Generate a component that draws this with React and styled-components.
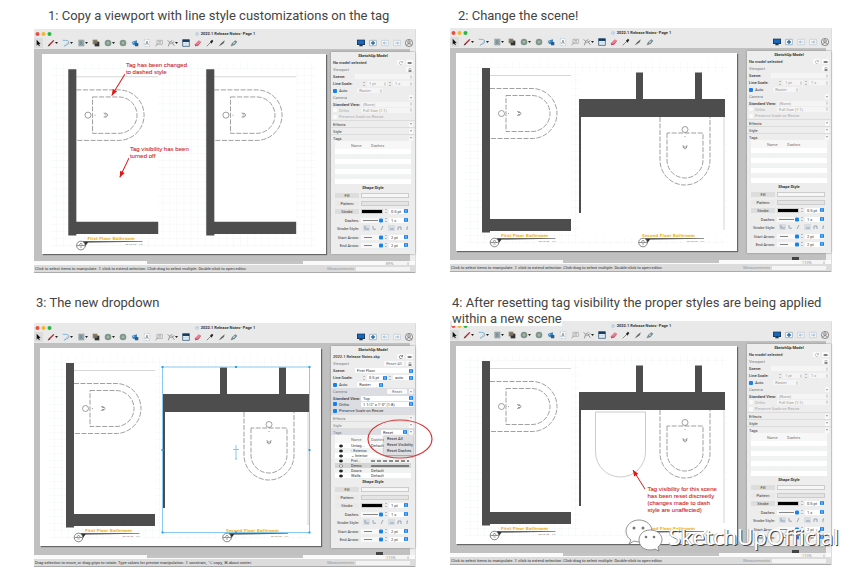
import React from "react";
import styled, { createGlobalStyle } from "styled-components";

const tools = [
  { name: "Select", kind: "cursor", active: true },
  { name: "Line", kind: "pencil", menu: true },
  { name: "Arc", kind: "arc", menu: true },
  { name: "Rectangle", kind: "rect", menu: true },
  { name: "Offset", kind: "offset" },
  { name: "Circle", kind: "circle", menu: true },
  { name: "Polygon", kind: "circle" },
  { name: "Scrapbook", kind: "camera" },
  { name: "Text", kind: "text" },
  { name: "Label", kind: "label" },
  { name: "Dimension", kind: "dimension", menu: true },
  { name: "Table", kind: "table" },
  { name: "Erase", kind: "eraser" },
  { name: "Style", kind: "dropper" },
  { name: "Split", kind: "knife" },
  { name: "Join", kind: "glue" },
];

const pageTools = [
  { name: "Present", kind: "monitor" },
  { name: "Add page", kind: "addPage" },
  { name: "Previous page", kind: "prevPage" },
  { name: "Next page", kind: "nextPage" },
  { name: "Account", kind: "person" },
];

const glyphs = {
  cursor: <path d="M4 1v9l2-2 1.500 3 1.300-.7L7.400 7.500H10z" fill="#111" />,
  pencil: (
    <>
      <path d="M1.500 11 3 8 9.500 1.500l1.500 1L4.500 9.500z" fill="#b3262b" />
      <path d="M1 11.500 3 8l1.500 1.500z" fill="#333" />
    </>
  ),
  arc: (
    <>
      <path d="M1 2h5q5 0 4 5L3 11" fill="none" stroke="#66a9d8" strokeWidth="1.200" />
      <path d="M3 11 10 4" stroke="#aaa" strokeWidth="0.800" />
    </>
  ),
  rect: (
    <>
      <path d="M2 1h9v10H2z" fill="#9aa8a8" />
      <path d="M4 3h4v6H4z" fill="#7d949c" />
    </>
  ),
  offset: (
    <>
      <path d="M1 1h7v7H1z" fill="#8c8060" />
      <path d="M4 4h7v7H4z" fill="#333" />
      <path d="M3 3h5v4H3z" fill="#77746a" />
    </>
  ),
  circle: (
    <>
      <circle cx="6" cy="6" r="5" fill="#7f978e" />
      <circle cx="6" cy="6" r="3" fill="#a8b694" stroke="#6d8890" />
    </>
  ),
  camera: (
    <>
      <path d="M1 4 9 2v6L3 9z" fill="#3c86c5" />
      <path d="M5 6h6v5H6z" fill="#275d91" />
      <path d="m1 3 4 3" stroke="#d9eef8" />
    </>
  ),
  text: (
    <>
      <path d="M2 1h8v10H2z" fill="#fff" stroke="#8badc4" strokeDasharray="1 1" />
      <path d="m4 9 2-6 2 6M5 7h2" fill="none" stroke="#777" />
    </>
  ),
  label: (
    <>
      <path d="M3 2h8v6H3z" fill="#f5f5f5" stroke="#999" />
      <path d="m1 11 3-4M5 4h4M5 6h4" stroke="#888" />
    </>
  ),
  dimension: (
    <path d="m1 2 3 3-2 6M4 5l4-3M5 7l6-3M8 6l3 4" fill="none" stroke="#666" />
  ),
  table: (
    <>
      <path d="M1 1h10v10H1z" fill="#e8f2f8" stroke="#173c62" />
      <path d="M1 1h10v3.500H1z" fill="#173c62" />
      <path d="M1 7h10M6 4v7" stroke="#aac1d1" strokeWidth="0.600" />
    </>
  ),
  eraser: (
    <>
      <path d="m1 8 6-6 4 2-5 6-4 1z" fill="#e77f93" />
      <path d="m1 8 4 1 6-5-5 6-4 1z" fill="#bd4d66" />
    </>
  ),
  dropper: (
    <>
      <path d="M1 11 7 5" stroke="#888" strokeWidth="1.500" />
      <path d="m6 4 3-3 2 2-3 4z" fill="#222" />
    </>
  ),
  knife: <path d="m1 11 4-5 5-4-1 4-4 3z" fill="#666" />,
  glue: (
    <>
      <path d="m1 11 2-5 5-4 3 2-4 5z" fill="#6f8c9a" />
      <path d="m4 6 4-2-2 4z" fill="#d8ded5" />
      <path d="m1 11 2-3 1 2z" fill="#c07a45" />
    </>
  ),
  monitor: (
    <>
      <path d="M0 1h12v8H0z" fill="#1b2d42" />
      <path d="M1 2h10v6H1z" fill="#1767bd" />
      <path d="M4 9h4l1 2H3z" fill="#333" />
    </>
  ),
  addPage: (
    <>
      <path d="M1 2h10v8H1z" fill="#fff" stroke="#839db0" />
      <path d="M6 3v6M3 6h6" stroke="#246ca7" strokeWidth="2" />
    </>
  ),
  prevPage: (
    <>
      <path d="M1 2h10v8H1z" fill="#f6f6f6" stroke="#bbc8d1" />
      <path d="M3 6h6M6 4 3.500 6 6 8" fill="none" stroke="#7faed1" />
    </>
  ),
  nextPage: (
    <>
      <path d="M1 2h10v8H1z" fill="#f6f6f6" stroke="#bbc8d1" />
      <path d="M3 6h6M6 4l2.500 2L6 8" fill="none" stroke="#7faed1" />
    </>
  ),
  person: (
    <g fill="none" stroke="#555" strokeWidth="0.900">
      <circle cx="6" cy="6" r="5.500" />
      <circle cx="6" cy="4.500" r="2" />
      <path d="M2.500 10q0-3 3.500-3t3.500 3" />
    </g>
  ),
};

const Tool = ({ tool }) => (
  <ToolButton type="button" aria-label={tool.name} $menu={tool.menu} $active={tool.active}>
    <svg width="8" height="8" viewBox="0 0 12 12">
      {glyphs[tool.kind]}
    </svg>
    {tool.menu && (
      <svg width="3" height="2" viewBox="0 0 3 2">
        <path d="M0 0h3L1.500 2z" fill="#222" />
      </svg>
    )}
  </ToolButton>
);

const Picker = ({ label, value, on, width, children }) => (
  <PickerLabel $width={width} $grow={Boolean(children)}>
    {children}
    <PickerBox $on={on}>
      <select aria-label={label} defaultValue={value} disabled={!on}>
        <option>{value}</option>
      </select>
      <svg width="4" height="4" viewBox="0 0 8 8">
        {on && <rect width="8" height="8" rx="1.500" fill="#1781ea" />}
        <path d="M2 3.200 4 1.500 6 3.200M2 5 4 6.500 6 5" fill="none" stroke={on ? "#fff" : "#999"} />
      </svg>
    </PickerBox>
  </PickerLabel>
);

const Steps = () => (
  <svg width="2" height="6" viewBox="0 0 2 6">
    <path d="M0 2 1 1l1 1M0 4l1 1 1-1" fill="none" stroke="#888" strokeWidth="0.500" />
  </svg>
);

const Fold = () => (
  <FoldButton type="button" aria-label="Toggle section">
    <svg width="2" height="2" viewBox="0 0 3 2">
      <path d="M0 0h3L1.500 2z" fill="#777" />
    </svg>
  </FoldButton>
);

const tagRows = [
  ["Untag...", "Default", true],
  ["› Exterior", "", true],
  ["⌄ Interior", "", true],
  ["Fixt...", "dashed", true],
  ["Demo", "solid", false],
  ["Doors", "Default", true],
  ["Walls", "Default", true],
];

const TagTable = ({ on }) => (
  <Tags>
    <thead>
      <tr>
        <th />
        <th>Name</th>
        <th>Dashes</th>
      </tr>
    </thead>
    <tbody>
      {tagRows.map(([name, dashes, seen]) => (
        <TagRow key={name} $selected={on && !seen}>
          <td>
            {on && (
              <svg width="4" height="4" viewBox="0 0 8 8">
                <ellipse cx="4" cy="4" rx="3.500" ry="2.500" fill={seen ? "#222" : "#fff"} stroke="#444" />
              </svg>
            )}
          </td>
          <td>{on && name}</td>
          <td>
            {on && (dashes === "Default" ? dashes : dashes && (
              <svg width="38" height="2" viewBox="0 0 38 2">
                <path
                  d="M0 1h38"
                  stroke="#222"
                  strokeDasharray={dashes === "dashed" ? "4 2" : "none"}
                />
              </svg>
            ))}
          </td>
        </TagRow>
      ))}
    </tbody>
  </Tags>
);

const ModelPanel = ({ on }) => (
  <Panel>
    <PanelTitle>SketchUp Model</PanelTitle>
    <PanelRow $strong>
      <span>{on ? "2022.1 Release Notes.skp" : "No model selected"}</span>
      <Spacer />
      <SmallButton type="button" aria-label="Refresh model">
        <svg width="4" height="4" viewBox="0 0 8 8">
          <path d="M7 2a3.500 3.500 0 1 0 0 4M7 0v3H4" fill="none" stroke={on ? "#333" : "#999"} />
        </svg>
      </SmallButton>
      <SmallButton type="button" aria-label="Link model">∞</SmallButton>
    </PanelRow>
    <PanelRow $muted>
      Viewport
      <Spacer />
      {on && <SmallButton type="button" $wide>Reset All</SmallButton>}
      <SmallButton type="button" aria-label="Lock viewport">
        <svg width="4" height="4" viewBox="0 0 8 8">
          <path d="M2 4V1h4v3" fill="none" stroke="#888" />
          <path d="M1 4h6v4H1z" fill="#888" />
        </svg>
      </SmallButton>
    </PanelRow>
    <PanelRow $strong>
      <Picker label="Scene" value={on ? "First Floor" : ""} on={on} width={58}>Scene:</Picker>
    </PanelRow>
    <PanelRow $strong>
      Line Scale:
      <Spacer />
      <Steps />
      <Picker label="Line scale weight" value={on ? "0.5 pt" : "1 pt"} on={on} width={20} />
      <Steps />
      <Picker label="Dash scale" value={on ? "auto" : "1 x"} on={on} width={20} />
    </PanelRow>
    <PanelRow>
      <CheckLabel>
        <input type="checkbox" defaultChecked />
        Auto
      </CheckLabel>
      <RenderSlot>
        <Picker label="Render mode" value="Raster" on={on} width={26} />
      </RenderSlot>
    </PanelRow>
    <CameraGroup $on={on}>
      <PanelRow $muted>
        Camera
        <Spacer />
        {on && <SmallButton type="button" $wide>Reset</SmallButton>}
        <Fold />
      </PanelRow>
      <PanelRow $short $strong>
        <Picker label="Standard view" value={on ? "Top" : "(None)"} on={on} width={52}>
          Standard View:
        </Picker>
      </PanelRow>
      <PanelRow $short $dim={!on}>
        <CheckLabel>
          <input type="checkbox" defaultChecked={on} disabled={!on} />
          Ortho
        </CheckLabel>
        <Spacer />
        <Picker label="Scale" value={on ? `1 1/2" = 1'-0" (1:8)` : "Full Size (1:1)"} on={on} width={52} />
      </PanelRow>
      <PanelRow $dim={!on}>
        <CheckLabel>
          <input type="checkbox" defaultChecked={on} disabled={!on} />
          Preserve Scale on Resize
        </CheckLabel>
      </PanelRow>
    </CameraGroup>
    <PanelRow $line $muted={on}>Effects<Spacer /><Fold /></PanelRow>
    <PanelRow $line $muted={on}>Style<Spacer /><Fold /></PanelRow>
    <PanelRow $line $muted={on} $tint={on}>
      Tags
      <Spacer />
      {on && <Picker label="Reset tags" value="Reset" on width={26} />}
      <Fold />
      {on && (
        <Menu role="menu">
          <button type="button" role="menuitem">Reset All</button>
          <button type="button" role="menuitem">Reset Visibility</button>
          <button type="button" role="menuitem">Reset Dashes</button>
        </Menu>
      )}
    </PanelRow>
    <TagTable on={on} />
    <PanelTitle>Shape Style</PanelTitle>
    <ShapeForm>
      <FormRow>
        <ShapeButton type="button">Fill</ShapeButton>
        <Swatch />
      </FormRow>
      <FormRow>
        <ShapeButton type="button" $plain>Pattern</ShapeButton>
        <Swatch $grey />
      </FormRow>
      <FormRow>
        <ShapeButton type="button" $plain={on}>Stroke</ShapeButton>
        <Ink />
        <Steps />
        <Picker label="Stroke width" value={on ? "1 pt" : "0.5 pt"} on width={19} />
      </FormRow>
      <FormRow $apart>
        <FormName>Dashes:</FormName>
        <LineChoice />
        <Steps />
        <Picker label="Dash size" value="1 x" on width={19} />
      </FormRow>
      <FormRow>
        <FormName>Stroke Style:</FormName>
        <StrokeIcons />
      </FormRow>
      <FormRow $apart>
        <FormName>Start Arrow:</FormName>
        <LineChoice short />
        <Steps />
        <Picker label="Start arrow size" value="2 pt" on width={19} />
      </FormRow>
      <FormRow>
        <FormName>End Arrow:</FormName>
        <LineChoice short />
        <Steps />
        <Picker label="End arrow size" value="2 pt" on width={19} />
      </FormRow>
    </ShapeForm>
  </Panel>
);

const LineChoice = ({ short }) => (
  <svg width="22" height="5" viewBox="0 0 22 5">
    <path d="M0 0h22v5H0z" fill="#f8f8f8" />
    <path d={short ? "M3 2.500h8" : "M2 2.500h15"} stroke="#555" strokeWidth="0.700" />
    <rect x="18" y="0.500" width="4" height="4" rx="1" fill="#1781ea" />
  </svg>
);

const StrokeIcons = () => (
  <svg width="48" height="6" viewBox="0 0 48 6">
    <path d="M2 0h7v6H2zM27 0h7v6h-7z" fill="#d8dde2" />
    <path
      d="M4 1v3h4M12 1v3q0 1 3 0M20 5l2-4M29 4h4M37 5V2h3v3M46 5V2h1"
      fill="none"
      stroke="#7d95ad"
      strokeWidth="0.800"
    />
  </svg>
);

const PlanTitle = ({ x, bubble, children }) => (
  <g>
    <TitleText x={x} y="184">{children}</TitleText>
    <path d={`M${bubble + 2} 185.200h59v.6l-54 .8-3 4z`} fill="#333" />
    <text x={bubble + 44} y="189" fontSize="2" fill="#666">SCALE: 1/2" = 1'-0"</text>
    <circle cx={bubble} cy="189.500" r="4.300" fill="#fff" stroke="#555" strokeWidth="0.700" />
    <path d={`M${bubble - 4} 189.500h8m-6 0 2-2.500 2 2.500m-3 1.500h2`} stroke="#555" strokeWidth="0.600" fill="none" />
  </g>
);

const FirstPlan = ({ x = 0 }) => (
  <g transform={`translate(${x} 0)`}>
    <path d="M34 15h81v151H34z" fill="#fff" />
    <path d="M34 22.500h81" stroke="#bbb" strokeWidth="0.600" />
    <path d="M26 15h8v151h81v12H34v1.500h-8z" fill="#4d4d4d" />
    <g fill="none" stroke="#777" strokeWidth="0.700">
      <path d="M34 35.500h42a25 25 0 0 1 0 50H34" strokeDasharray="5 1.500" />
      <path d="M50 42.500h26a18 18 0 0 1 0 36H50z" strokeDasharray="5 1.500" />
      <circle cx="45.500" cy="60.500" r="3" />
      <path d="M61 58.500q4 0 4 2t-4 2M62 59.500h2M62 61.500h2M52 60.500h1" />
    </g>
  </g>
);

const SecondPlan = () => (
  <g>
    <path d="M123 19h146v166H123z" fill="#fff" />
    <path d="M268 64v113" stroke="#bbb" strokeWidth="0.600" />
    <path d="M180 19.500h7V46h52V19.500h7V46h23v18H125v96h-2V46h57z" fill="#4d4d4d" />
    <g fill="none" stroke="#777" strokeWidth="0.700">
      <path d="M204 64v43a25 25 0 0 0 50 0V64" strokeDasharray="5 1.500" />
      <path d="M211 80v27a18 18 0 0 0 36 0V80z" strokeDasharray="5 1.500" />
      <circle cx="229" cy="76.500" r="3" />
      <path d="M227 92q0 4 2 4t2-4M228 93v2M230 93v2M229 83v1" />
    </g>
  </g>
);

const Arrow = ({ x1, y1, x2, y2 }) => {
  const turn = (Math.atan2(y2 - y1, x2 - x1) * 180) / Math.PI;
  return (
    <g fill="#e01515" stroke="#e01515">
      <path d={`M${x1} ${y1} ${x2} ${y2}`} />
      <path d="M0 0-6-2.500v5z" stroke="none" transform={`translate(${x2} ${y2}) rotate(${turn})`} />
    </g>
  );
};

const Note = ({ x, y, lines }) => (
  <text fontSize="6" fill="#cf2a2f" stroke="#cf2a2f" strokeWidth="0.100">
    {lines.map((line, i) => (
      <tspan key={line} x={x} y={y + i * 7}>{line}</tspan>
    ))}
  </text>
);

const Sheet = ({ id, children }) => (
  <Paper viewBox="0 0 281 198">
    <defs>
      <pattern id={id} width="7" height="7" patternUnits="userSpaceOnUse">
        <path d="M0 0h7M0 0v7" stroke="#e6ecef" strokeWidth="0.500" fill="none" />
      </pattern>
    </defs>
    <path d="M9 9h262v182H9z" fill={`url(#${id})`} />
    {children}
  </Paper>
);

const AppWindow = ({ children, inset, gap, on, zoom, marker, status }) => (
  <Frame>
    <TitleBar>
      <Lights viewBox="0 0 18 4">
        <circle cx="2.500" cy="2" r="2" fill="#f04b43" />
        <circle cx="8.500" cy="2" r="2" fill="#f5b52e" />
        <circle cx="14.500" cy="2" r="2" fill="#24b83d" />
      </Lights>
      <DocName>
        <svg width="4" height="4" viewBox="0 0 8 8">
          <circle cx="4" cy="4" r="3.500" fill="#9cc6ea" />
          <path d="M3 2v3h3" fill="none" stroke="#fff" />
        </svg>
        2022.1 Release Notes- Page 1
      </DocName>
    </TitleBar>
    <ToolBar>
      {tools.map((tool) => <Tool key={tool.name} tool={tool} />)}
      <Spacer />
      {pageTools.map((tool) => <Tool key={tool.name} tool={tool} />)}
    </ToolBar>
    <Workspace $inset={inset} $gap={gap}>
      {children}
      <ModelPanel on={on} />
      {marker && <Marker />}
    </Workspace>
    <ScrollRow>
      <Thumb />
      <ZoomSlot>
        <Picker label="Zoom" value={zoom} on={false} width={26} />
      </ZoomSlot>
    </ScrollRow>
    <StatusBar>
      <span>{status}</span>
      <Measure>
        Measurements
        <input />
      </Measure>
    </StatusBar>
  </Frame>
);

const selectHint =
  "Click to select items to manipulate. ⇧ click to extend selection. Click-drag to select multiple. Double-click to open editor.";
const dragHint =
  "Drag selection to move, or drag grips to rotate. Type values for precise manipulation. ⇧ constrain, ⌥ copy, ⌘ about center.";

const App = () => (
  <Board>
    <GlobalStyle />
    <Step>
      <Caption $height={29} $indent={14}>
        <span>1: Copy a viewport with line style customizations on the tag</span>
      </Caption>
      <AppWindow inset={8} gap={5} zoom="89%" status={selectHint}>
        <Sheet id="gridCopy">
          <FirstPlan />
          <FirstPlan x={136.500} />
          <PlanTitle x={45} bubble={38.500}>First Floor Bathroom</PlanTitle>
          <Note x={83} y={13} lines={["Tag has been changed", "to dashed style"]} />
          <Arrow x1={82} y1={20} x2={69} y2={41} />
          <Note x={87} y={96} lines={["Tag visibility has been", "turned off"]} />
          <Arrow x1={86} y1={103} x2={77} y2={122} />
        </Sheet>
      </AppWindow>
    </Step>
    <Step>
      <Caption $height={28} $indent={8}>
        <span>2: Change the scene!</span>
      </Caption>
      <AppWindow inset={6} gap={10} zoom="110%" marker status={selectHint}>
        <Sheet id="gridScene">
          <FirstPlan />
          <SecondPlan />
          <PlanTitle x={45} bubble={38.500}>First Floor Bathroom</PlanTitle>
          <PlanTitle x={186} bubble={187}>Second Floor Bathroom</PlanTitle>
        </Sheet>
      </AppWindow>
    </Step>
    <Step>
      <Caption $height={32} $indent={2}>
        <span>3: The new dropdown</span>
      </Caption>
      <AppWindow inset={6} gap={10} zoom="110%" marker on status={dragHint}>
        <Sheet id="gridMenu">
          <FirstPlan />
          <SecondPlan />
          <PlanTitle x={45} bubble={38.500}>First Floor Bathroom</PlanTitle>
          <PlanTitle x={186} bubble={187}>Second Floor Bathroom</PlanTitle>
          <path d="M122.500 19h147v165.500h-147z" fill="none" stroke="#55b5e6" strokeWidth="0.700" />
          <path
            d="M121.500 18h2v2h-2zM195 18h2v2h-2zM268.500 18h2v2h-2zM121.500 101h2v2h-2zM268.500 101h2v2h-2zM121.500 183.500h2v2h-2zM195 183.500h2v2h-2zM268.500 183.500h2v2h-2z"
            fill="#2fa0dc"
          />
          <path d="M196 97v14M193 101.500h6M195 111h2" stroke="#55b5e6" strokeWidth="0.700" />
        </Sheet>
      </AppWindow>
      <Ring viewBox="0 0 66 40">
        <ellipse cx="33" cy="20" rx="32" ry="19" fill="none" stroke="#d8383a" strokeWidth="1.200" />
      </Ring>
    </Step>
    <Step>
      <Caption $height={30} $indent={2}>
        <span>4: After resetting tag visibility the proper styles are being applied within a new scene</span>
      </Caption>
      <AppWindow inset={6} gap={10} zoom="110%" marker status={selectHint}>
        <Sheet id="gridReset">
          <FirstPlan />
          <SecondPlan />
          <path d="M139.500 66h50v40a25 25 0 0 1-50 0z" fill="none" stroke="#aaa" strokeWidth="0.600" />
          <PlanTitle x={45} bubble={38.500}>First Floor Bathroom</PlanTitle>
          <PlanTitle x={186} bubble={187}>Second Floor Bathroom</PlanTitle>
          <Note
            x={191.500}
            y={145}
            lines={[
              "Tag visibility for this scene",
              "has been reset discreetly",
              "(changes made to dash",
              "style are unaffected)",
            ]}
          />
          <Arrow x1={189} y1={143} x2={177} y2={124} />
        </Sheet>
      </AppWindow>
      <Watermark>
        <svg width="38" height="34" viewBox="0 0 38 34">
          <g fill="#fff" stroke="#777" strokeWidth="0.800">
            <path d="M14 1C7 1 1 6 1 12c0 4 2 7 5 9l-2 4 5-3q3 1 7 1c7 0 11-5 11-11S21 1 14 1z" />
            <path d="M25 11c-6 0-11 4-11 10s5 10 11 10q3 0 5-1l4 2-1-4c2-2 4-4 4-7 0-6-5-10-12-10z" />
          </g>
          <g fill="#777">
            <circle cx="9" cy="9" r="1.500" />
            <circle cx="18" cy="9" r="1.500" />
            <circle cx="21" cy="18" r="1.300" />
            <circle cx="29" cy="18" r="1.300" />
          </g>
        </svg>
        SketchUpOfficial
      </Watermark>
    </Step>
  </Board>
);

const GlobalStyle = createGlobalStyle`
  body {
    margin: 0;
    background: #fff;
    font-family: Roboto, "Liberation Sans", sans-serif;
  }
  * {
    box-sizing: border-box;
  }
  button, input, select {
    margin: 0;
    padding: 0;
    border: 0;
    color: inherit;
    font: inherit;
  }
  svg {
    flex: none;
  }
`;

const Board = styled.main`
  display: grid;
  grid-template-columns: 1fr 1fr;
  align-items: start;
  gap: 18px 34px;
  padding: 0 33px 10px 34px;
`;

const Step = styled.section`
  position: relative;
  min-width: 0;
`;

const Caption = styled.h2`
  position: relative;
  z-index: 1;
  height: ${(p) => p.$height}px;
  margin: 0;
  padding: ${(p) => (p.$height > 29 ? 4 : 8)}px 0 0 ${(p) => p.$indent}px;
  color: #444;
  font-size: 13px;
  font-weight: 400;
  line-height: 16px;
  span {
    background: #fff;
  }
`;

const Frame = styled.div`
  display: flex;
  flex-direction: column;
  border-right: 1px solid #ddd;
  background: #e9e9e9;
  color: #333;
  font-size: 4px;
  line-height: 5px;
`;

const TitleBar = styled.div`
  display: flex;
  align-items: center;
  height: 8px;
  padding: 1px 2px 0 1px;
`;

const Lights = styled.svg`
  width: 18px;
  height: 4px;
`;

const DocName = styled.div`
  display: flex;
  flex: 1;
  align-items: center;
  justify-content: center;
  gap: 2px;
  padding-right: 16px;
  font-weight: 700;
`;

const ToolBar = styled.div`
  display: flex;
  align-items: center;
  gap: 4px;
  height: 12px;
  padding-right: 2px;
`;

const ToolButton = styled.button`
  display: flex;
  align-items: center;
  width: ${(p) => (p.$menu ? 11 : p.$active ? 9 : 8)}px;
  height: 10px;
  background: ${(p) => (p.$active ? "#dcdcdc" : "transparent")};
`;

const Spacer = styled.span`
  flex: 1;
`;

const Workspace = styled.div`
  position: relative;
  display: flex;
  align-items: flex-start;
  gap: ${(p) => p.$gap}px;
  padding: 3px 0 7px ${(p) => p.$inset}px;
  background: linear-gradient(to left, #eee 5px, #c0c0c0 5px);
`;

const Marker = styled.span`
  position: absolute;
  right: 32px;
  bottom: 0;
  width: 7px;
  height: 3px;
  background: #444;
`;

const Paper = styled.svg`
  flex: 1;
  min-width: 0;
  margin-top: 2px;
  background: #fff;
  box-shadow: 1px 1px 1px #666;
  font-family: "Liberation Sans", Arial, sans-serif;
`;

const TitleText = styled.text`
  fill: #f0b323;
  font-family: "DejaVu Sans", sans-serif;
  font-size: 4px;
  font-weight: 700;
`;

const Panel = styled.aside`
  width: 84px;
  flex: none;
  background: #ededed;
  box-shadow: 0 0 2px #888;
`;

const PanelTitle = styled.div`
  height: 7px;
  line-height: 7px;
  text-align: center;
  font-weight: 700;
`;

const PanelRow = styled.div`
  position: relative;
  display: flex;
  align-items: center;
  gap: 2px;
  height: ${(p) => (p.$short ? 6 : 7)}px;
  padding: 0 2px;
  border-top: ${(p) => (p.$line ? "1px solid #dcdcdc" : "0")};
  background: ${(p) => (p.$tint ? "#dcdce3" : "transparent")};
  color: ${(p) => (p.$dim ? "#aaa" : p.$muted ? "#777" : "#333")};
  font-weight: ${(p) => (p.$strong ? 500 : 400)};
  white-space: nowrap;
`;

const CameraGroup = styled.div`
  border-radius: 1px;
  background: ${(p) => (p.$on ? "#dcdce3" : "transparent")};
`;

const SmallButton = styled.button`
  display: flex;
  align-items: center;
  justify-content: center;
  width: ${(p) => (p.$wide ? 20 : 7)}px;
  height: 5px;
  border-radius: 1px;
  background: #fafafa;
  line-height: 5px;
`;

const FoldButton = styled(SmallButton)`
  width: 4px;
`;

const PickerLabel = styled.label`
  display: flex;
  align-items: center;
  justify-content: space-between;
  flex: ${(p) => (p.$grow ? 1 : "none")};
  > span {
    width: ${(p) => p.$width}px;
  }
`;

const PickerBox = styled.span`
  display: flex;
  align-items: center;
  height: 5px;
  border-radius: 1px;
  background: ${(p) => (p.$on ? "#fff" : "#f5f5f5")};
  font-weight: 400;
  select {
    flex: 1;
    width: 0;
    min-width: 0;
    height: 5px;
    padding-left: 2px;
    appearance: none;
    background: transparent;
    color: ${(p) => (p.$on ? "#333" : "#999")};
    line-height: 5px;
    opacity: 1;
  }
`;

const CheckLabel = styled.label`
  display: flex;
  align-items: center;
  gap: 2px;
  input {
    width: 4px;
    height: 4px;
    appearance: none;
    border-radius: 1px;
    background: #fafafa;
  }
  input:checked {
    background: #1781ea;
  }
`;

const RenderSlot = styled.div`
  margin-left: 8px;
`;

const Menu = styled.div`
  position: absolute;
  z-index: 2;
  top: 6px;
  right: 2px;
  display: flex;
  flex-direction: column;
  width: 29px;
  padding: 1px 0;
  background: #dfdfe2;
  box-shadow: 0 1px 2px #888;
  color: #222;
  button {
    height: 6px;
    padding-left: 3px;
    background: transparent;
    line-height: 6px;
    text-align: left;
  }
`;

const Tags = styled.table`
  width: 84px;
  padding: 0 4px;
  border-spacing: 0;
  table-layout: fixed;
  th, td {
    height: 5px;
    padding: 0;
    overflow: hidden;
    line-height: 5px;
    text-align: left;
    white-space: nowrap;
  }
  th {
    height: 8px;
    background: #f7f7f7;
    color: #777;
    font-weight: 400;
  }
  th:nth-child(1) {
    width: 16px;
  }
  th:nth-child(2) {
    width: 20px;
  }
  td:first-child {
    padding-left: 4px;
  }
  svg {
    display: block;
  }
`;

const TagRow = styled.tr`
  &:nth-child(odd) {
    background: ${(p) => (p.$selected ? "#d4d4d4" : "#fff")};
  }
  &:nth-child(even) {
    background: #f1f3f3;
  }
`;

const ShapeForm = styled.div`
  padding: 0 6px 5px 4px;
`;

const FormRow = styled.div`
  display: flex;
  align-items: center;
  gap: 2px;
  height: 8px;
  margin-top: ${(p) => (p.$apart ? 1 : 0)}px;
`;

const ShapeButton = styled.button`
  width: 24px;
  height: 5px;
  background: ${(p) => (p.$plain ? "#e9e9e9" : "#ddd")};
  line-height: 5px;
`;

const FormName = styled.span`
  width: 24px;
  text-align: right;
  white-space: nowrap;
`;

const Swatch = styled.span`
  flex: 1;
  height: 5px;
  border: 1px solid #ccc;
  background: ${(p) => (p.$grey ? "#e4e4e4" : "#f6f6f6")};
`;

const Ink = styled.span`
  width: 22px;
  height: 5px;
  border: 1px solid #ccc;
  background: #000;
`;

const ScrollRow = styled.div`
  display: flex;
  height: 4px;
  padding: 0 5px 0 113px;
  background: #fafafa;
`;

const Thumb = styled.div`
  width: 156px;
  height: 3px;
  background: #c4c4c4;
`;

const ZoomSlot = styled.div`
  margin-left: auto;
`;

const StatusBar = styled.div`
  display: flex;
  align-items: center;
  justify-content: space-between;
  height: 8px;
  padding: 0 5px 0 1px;
  border-bottom: 1px solid #aaa;
  background: #dcdcdc;
`;

const Measure = styled.label`
  display: flex;
  align-items: center;
  gap: 2px;
  color: #999;
  input {
    width: 54px;
    height: 4px;
    background: #f4f4f4;
  }
`;

const Ring = styled.svg`
  position: absolute;
  right: -17px;
  bottom: 108px;
  width: 66px;
  height: 40px;
`;

const Watermark = styled.div`
  position: absolute;
  right: -7px;
  bottom: 12px;
  display: flex;
  align-items: center;
  gap: 6px;
  color: #fff;
  font-family: "Noto Sans", sans-serif;
  font-size: 22px;
  line-height: 34px;
  text-shadow: 1px 1px 0 #444, -1px 0 0 #bbb;
`;

export default App;
